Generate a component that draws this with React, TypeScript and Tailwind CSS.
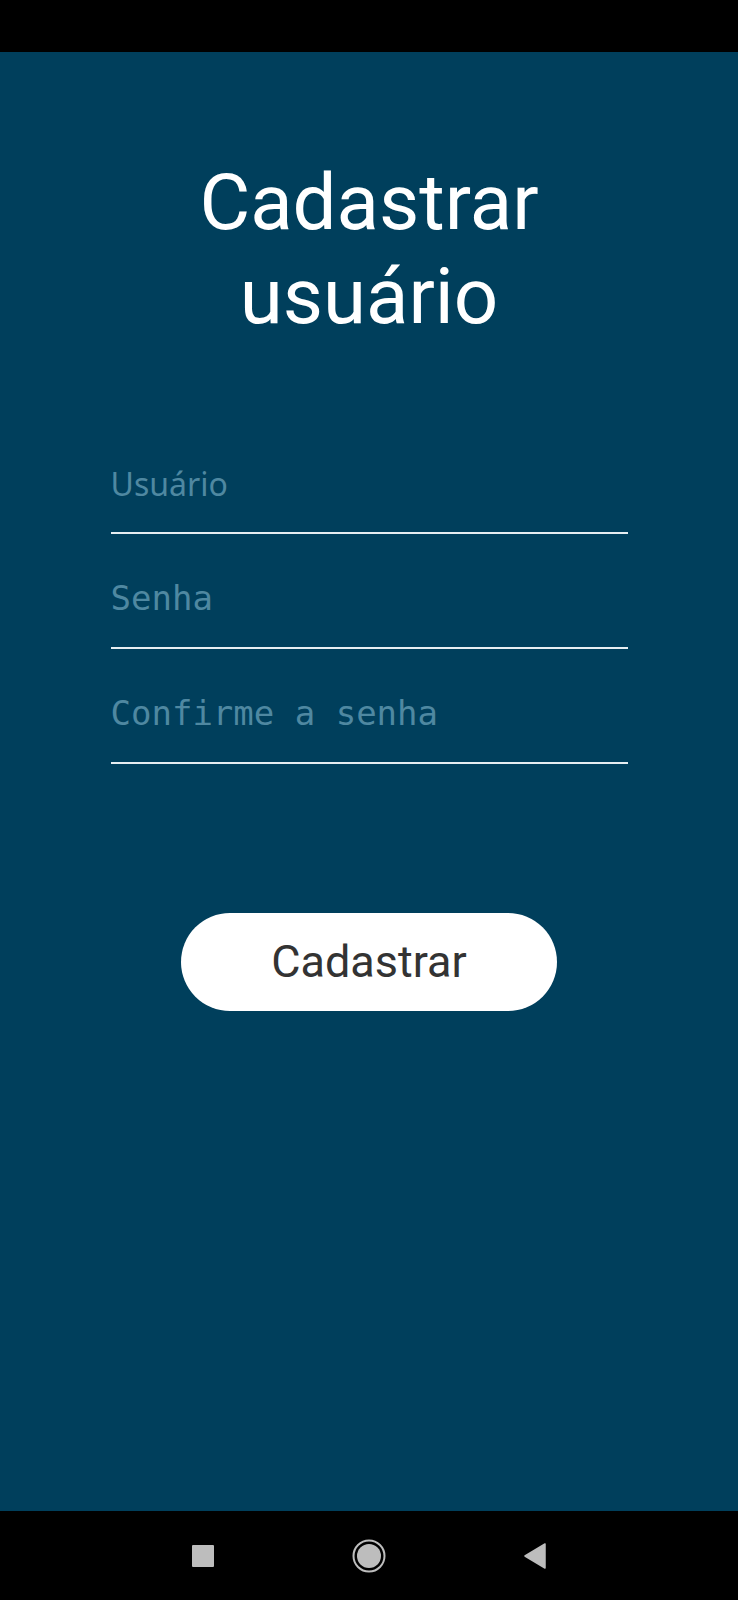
import React from 'react';

export default function App() {
  const [user, setUser] = React.useState('');
  const [password, setPassword] = React.useState('');
  const [confirm, setConfirm] = React.useState('');

  return (
    <div className="w-[738px] h-[1600px] flex flex-col bg-black">
      {/* status bar */}
      <div className="h-[52px] bg-black" />

      <main className="h-[1459px] bg-[#003f5c] flex flex-col items-center pt-[104px]">
        <h1 className="text-white text-[78px] leading-[1.2] text-center font-['Roboto',sans-serif] font-normal">
          Cadastrar
          <br />
          usuário
        </h1>

        <div className="w-[517px] mt-[91px] flex flex-col gap-[15px]">
          <input
            type="text"
            value={user}
            onChange={(e) => setUser(e.target.value)}
            placeholder="Usuário"
            className="h-[100px] w-full bg-transparent border-b-2 border-[#e6eef2] px-0 text-[32px] text-white placeholder:text-[#4f88a1] font-['Noto_Sans',sans-serif] outline-none"
          />
          <input
            type="password"
            value={password}
            onChange={(e) => setPassword(e.target.value)}
            placeholder="Senha"
            className="h-[100px] w-full bg-transparent border-b-2 border-[#e6eef2] px-0 text-[34px] text-white placeholder:text-[#4f88a1] font-['DejaVu_Sans_Mono',monospace] outline-none"
          />
          <input
            type="password"
            value={confirm}
            onChange={(e) => setConfirm(e.target.value)}
            placeholder="Confirme a senha"
            className="h-[100px] w-full bg-transparent border-b-2 border-[#e6eef2] px-0 text-[34px] text-white placeholder:text-[#4f88a1] font-['DejaVu_Sans_Mono',monospace] outline-none"
          />
        </div>

        <button
          type="button"
          className="mt-[149px] w-[376px] h-[98px] rounded-full bg-white text-[#333333] text-[45px] font-['Roboto',sans-serif]"
        >
          Cadastrar
        </button>
      </main>

      {/* navigation bar */}
      <nav className="h-[89px] bg-black flex items-center justify-center gap-[132px]">
        <div className="w-[34px] h-[34px] flex items-center justify-center">
          <div className="w-[22px] h-[22px] bg-[#bdbdbd] rounded-[1px]" />
        </div>
        <div className="w-[34px] h-[34px] flex items-center justify-center">
          <svg width="34" height="34" viewBox="0 0 34 34">
            <circle cx="17" cy="17" r="15.5" fill="none" stroke="#bdbdbd" strokeWidth="2" />
            <circle cx="17" cy="17" r="12" fill="#bdbdbd" />
          </svg>
        </div>
        <div className="w-[34px] h-[34px] flex items-center justify-center">
          <svg width="24" height="26" viewBox="0 0 24 26">
            <path d="M22 1 L22 25 L2 13 Z" fill="#bdbdbd" strokeLinejoin="round" stroke="#bdbdbd" strokeWidth="1.5" />
          </svg>
        </div>
      </nav>
    </div>
  );
}
